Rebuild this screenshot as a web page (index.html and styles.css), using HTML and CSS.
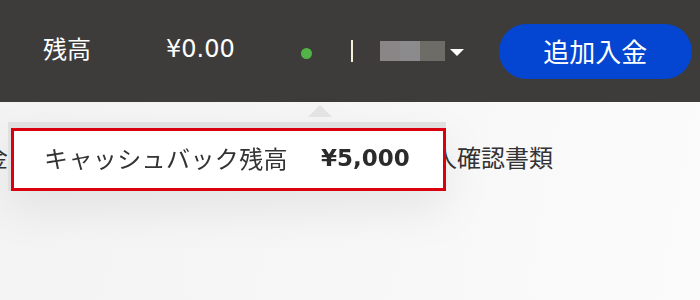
FILE: index.html
```html
<!DOCTYPE html>
<html lang="ja">
<head>
<meta charset="utf-8">
<link rel="stylesheet" href="styles.css">
</head>
<body>
<header class="topbar">
  <span class="label">残高</span>
  <span class="amount">¥0.00</span>
  <span class="dot"></span>
  <span class="sep"></span>
  <span class="user">
    <span class="blur"><i class="b1"></i><i class="b2"></i><i class="b3"></i></span>
    <span class="caret"></span>
  </span>
  <button class="deposit">追加入金</button>
</header>
<main class="content">
  <nav class="menu">
    <span class="menu-item first">入金</span>
    <span class="menu-item second">本人確認書類</span>
  </nav>
  <div class="popup">
    <div class="arrow"></div>
    <div class="popup-body">
      <div class="cashback">
        <span class="cb-label">キャッシュバック残高</span>
        <span class="cb-value">¥5,000</span>
      </div>
    </div>
  </div>
</main>
</body>
</html>
```
FILE: styles.css
```css
html, body {
  margin: 0;
  padding: 0;
}
body {
  width: 700px;
  height: 300px;
  overflow: hidden;
  font-family: "Noto Sans CJK JP", sans-serif;
  background: linear-gradient(100deg, #f3f3f3 0%, #f6f6f6 40%, #fbfbfb 100%);
  position: relative;
}
.topbar {
  height: 102px;
  background: #3d3c3a;
  display: flex;
  align-items: center;
  color: #fff;
  box-sizing: border-box;
  padding-left: 43px;
}
.label {
  font-size: 24px;
  line-height: 1;
  margin-top: -6px;
}
.amount {
  font-family: "DejaVu Sans", sans-serif;
  font-size: 24px;
  line-height: 1;
  margin-left: 75px;
  margin-top: -5px;
}
.dot {
  width: 11px;
  height: 11px;
  border-radius: 50%;
  background: #52b447;
  margin-left: 66px;
  margin-top: 4px;
}
.sep {
  width: 2px;
  height: 22px;
  background: #f3efd8;
  margin-left: 39px;
}
.user {
  display: flex;
  align-items: center;
  margin-left: 27px;
}
.blur {
  display: flex;
  height: 20px;
  filter: blur(0.6px);
}
.blur i {
  display: block;
  height: 20px;
  width: 20px;
}
.b1 { background: #8a8586; }
.b2 { background: #8b8a8c; }
.b3 { background: #6d6c66; width: 25px !important; }
.caret {
  width: 0;
  height: 0;
  border-left: 7px solid transparent;
  border-right: 7px solid transparent;
  border-top: 7px solid #fff;
  margin-left: 5px;
  margin-top: 2px;
}
.deposit {
  margin-left: 35px;
  width: 193px;
  height: 55px;
  border: none;
  border-radius: 28px;
  background: #0446d2;
  color: #fff;
  font-family: "Noto Sans CJK JP", sans-serif;
  font-size: 26px;
  padding: 0 0 3px;
  margin-top: 1px;
}
.content {
  position: relative;
  height: 198px;
}
.menu {
  display: flex;
  padding-top: 37px;
  font-size: 24px;
  color: #333;
}
.menu-item.first {
  margin-left: -40px;
}
.menu-item.second {
  margin-left: 401px;
}
.popup {
  position: absolute;
  left: 8px;
  top: 3px;
  width: 438px;
  filter: drop-shadow(0 18px 22px rgba(0,0,0,0.07));
}
.arrow {
  width: 0;
  height: 0;
  margin-left: 300px;
  border-left: 12px solid transparent;
  border-right: 12px solid transparent;
  border-bottom: 12px solid #e3e3e3;
}
.popup-body {
  margin-top: 5px;
  background: #e0e0e0;
  padding-top: 6px;
}
.cashback {
  margin-left: 3px;
  height: 63px;
  box-sizing: border-box;
  border: 3px solid #d9000f;
  background: #fff;
  display: flex;
  align-items: center;
  padding-left: 30px;
  padding-bottom: 4px;
}
.cb-label {
  font-size: 24px;
  letter-spacing: 0.4px;
  color: #333;
}
.cb-value {
  font-family: "DejaVu Sans", sans-serif;
  font-size: 23px;
  font-weight: 700;
  color: #2b2b2b;
  margin-left: 33px;
}
```
